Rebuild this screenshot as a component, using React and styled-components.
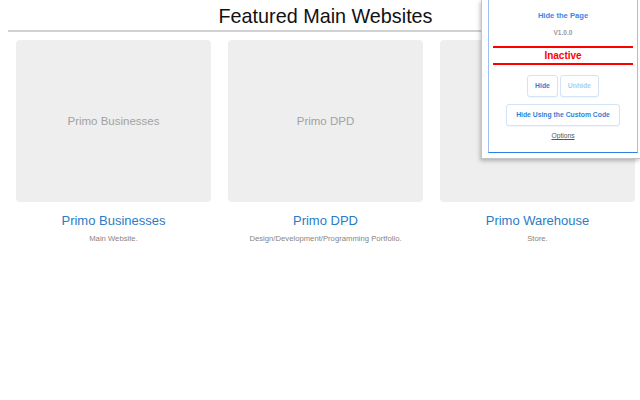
import React from 'react';
import styled, { createGlobalStyle } from 'styled-components';

const GlobalStyle = createGlobalStyle`
  html, body {
    margin: 0;
    padding: 0;
    background: #fff;
    font-family: "Liberation Sans", Arial, sans-serif;
    overflow: hidden;
  }
`;

// Page
const Page = styled.div`
  position: relative;
  width: 640px;
  height: 400px;
  padding-left: 8px;
  box-sizing: border-box;
`;

const Heading = styled.h1`
  margin: 0 0 0 8px;
  width: 619px;
  padding-top: 4px;
  font-size: 19.8px;
  line-height: 24px;
  font-weight: 400;
  color: #111;
  text-align: center;
`;

const Divider = styled.hr`
  margin: 2px 0 0;
  border: none;
  border-top: 2px solid #d2d2d2;
`;

const Grid = styled.div`
  display: grid;
  grid-template-columns: repeat(3, 195px);
  column-gap: 17px;
  margin: 8px 0 0 8px;
`;

const Item = styled.div`
  display: flex;
  flex-direction: column;
  align-items: center;
`;

const Thumb = styled.div`
  width: 100%;
  height: 162px;
  border-radius: 4px;
  background: #eeeeee;
  display: flex;
  align-items: center;
  justify-content: center;
  font-size: 11.5px;
  color: #a2a2a2;
`;

const ItemTitle = styled.a`
  margin-top: 11px;
  font-size: 13px;
  line-height: 16px;
  color: #2a7bc6;
  text-decoration: none;
`;

const ItemText = styled.p`
  margin: 5px 0 0;
  font-size: 7.7px;
  line-height: 10px;
  color: #8a8580;
`;

// Popup overlay
const Popup = styled.div`
  position: absolute;
  top: 0;
  right: 0;
  width: 159px;
  box-sizing: border-box;
  padding: 0 2px 5px 6px;
  background: #fff;
  border-left: 1px solid #c4c4c4;
  border-bottom: 1px solid #c4c4c4;
  box-shadow: -1px 2px 4px rgba(0, 0, 0, 0.25);
`;

const Panel = styled.div`
  display: flex;
  flex-direction: column;
  align-items: center;
  padding: 10px 4px 11px;
  border: 1px solid #9fc0ee;
  border-top: none;
  border-bottom: 1px solid #2f80e4;
`;

const PopTitle = styled.div`
  font-size: 7.6px;
  line-height: 12px;
  font-weight: 700;
  color: #3d86e6;
`;

const Version = styled.div`
  margin-top: 6px;
  font-size: 6.6px;
  line-height: 10px;
  font-weight: 700;
  color: #9a9a9a;
`;

const Status = styled.div`
  align-self: stretch;
  margin-top: 8px;
  border-top: 2px solid #ff0000;
  border-bottom: 2px solid #ff0000;
  font-size: 10px;
  line-height: 15px;
  font-weight: 700;
  color: #ff0000;
  text-align: center;
`;

const ButtonRow = styled.div`
  display: flex;
  gap: 2px;
  margin-top: 10px;
`;

const Button = styled.button`
  height: 22px;
  margin-top: ${(p) => p.$top || 0}px;
  padding: 0 ${(p) => p.$pad || 7}px;
  border: 1px solid #d3e4f7;
  border-radius: 3px;
  background: #fff;
  font-family: "Liberation Sans", Arial, sans-serif;
  font-size: 6.8px;
  line-height: 10px;
  font-weight: 700;
  color: ${(p) => (p.disabled ? '#a9cdf1' : '#2f7fd6')};
  box-shadow: 0 1px 1px rgba(160, 190, 230, 0.15);
  cursor: pointer;
`;

const OptionsLink = styled.a`
  margin-top: 5px;
  font-size: 6.7px;
  line-height: 10px;
  color: #555;
  text-decoration: underline;
`;

const sites = [
  { name: 'Primo Businesses', text: 'Main Website.' },
  { name: 'Primo DPD', text: 'Design/Development/Programming Portfolio.' },
  { name: 'Primo Warehouse', text: 'Store.' },
];

export default function App() {
  return (
    <>
      <GlobalStyle />
      <Page>
        <Heading>Featured Main Websites</Heading>
        <Divider />
        <Grid>
          {sites.map((s) => (
            <Item key={s.name}>
              <Thumb>{s.name}</Thumb>
              <ItemTitle href="#">{s.name}</ItemTitle>
              <ItemText>{s.text}</ItemText>
            </Item>
          ))}
        </Grid>

        <Popup>
          <Panel>
            <PopTitle>Hide the Page</PopTitle>
            <Version>V1.0.0</Version>
            <Status>Inactive</Status>
            <ButtonRow>
              <Button>Hide</Button>
              <Button disabled>Unhide</Button>
            </ButtonRow>
            <Button $top={7} $pad={9}>Hide Using the Custom Code</Button>
            <OptionsLink href="#">Options</OptionsLink>
          </Panel>
        </Popup>
      </Page>
    </>
  );
}
